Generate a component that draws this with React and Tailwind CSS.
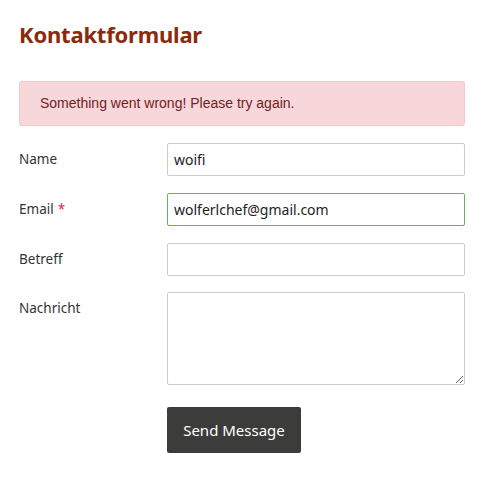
import React from 'react';

const fieldClass =
  "w-full h-[33px] border border-[#cccccc] rounded-[2px] px-[6px] text-[14px] text-[#222] bg-white outline-none";

const Row = ({ label, required, children }) => (
  <div className="flex items-start">
    <label className="w-[148px] shrink-0 h-[33px] flex items-center text-[13.5px] text-[#333]">
      {label}
      {required && <span className="text-[#e3264d] ml-[4px]">*</span>}
    </label>
    <div className="flex-1">{children}</div>
  </div>
);

export default function App() {
  return (
    <div className="w-[500px] h-[481px] bg-white px-[19px] pt-[18px]" style={{ fontFamily: '"Noto Sans", "Open Sans", sans-serif' }}>
      <h1 className="text-[22px] font-bold text-[#8b2a0c] leading-[32px] tracking-[-0.2px]" style={{ fontFamily: '"Noto Sans", sans-serif' }}>
        Kontaktformular
      </h1>

      <div
        className="mt-[31px] w-[446px] h-[45px] bg-[#f8d7da] border border-[#f5c6cb] rounded-[3px] pl-[20px] flex items-center text-[14px] text-[#721c24]"
        style={{ fontFamily: '"Liberation Sans", Arial, sans-serif' }}
      >
        Something went wrong! Please try again.
      </div>

      <form className="mt-[17px] w-[446px] flex flex-col gap-[17px]">
        <Row label="Name">
          <input className={fieldClass} defaultValue="woifi" />
        </Row>
        <Row label="Email" required>
          <input className={fieldClass + " !border-[#5cb85c]"} defaultValue="wolferlchef@gmail.com" />
        </Row>
        <Row label="Betreff">
          <input className={fieldClass} defaultValue="" />
        </Row>
        <div className="-mt-[1px]">
          <Row label="Nachricht">
            <textarea className="w-full h-[93px] border border-[#cccccc] rounded-[2px] px-[6px] py-[4px] block outline-none text-[14px]" />
          </Row>
        </div>
        <div className="flex mt-[5px]">
          <div className="w-[148px] shrink-0" />
          <button
            type="button"
            className="w-[134px] h-[46px] bg-[#3c3c3b] text-white text-[15px] rounded-[2px]"
          >
            Send Message
          </button>
        </div>
      </form>
    </div>
  );
}
